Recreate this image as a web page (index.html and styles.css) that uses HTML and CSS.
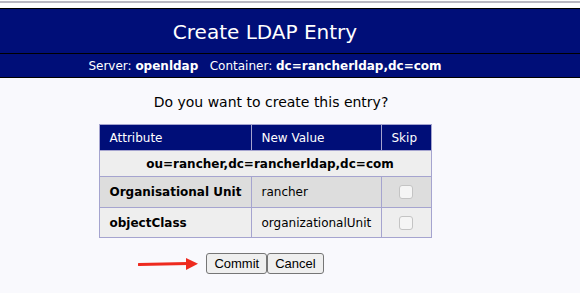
FILE: index.html
```html
<!DOCTYPE html>
<html lang="en">
<head>
    <meta charset="UTF-8">
    <meta name="viewport" content="width=device-width, initial-scale=1.0">
    <title>Create LDAP Entry</title>
    <link rel="stylesheet" href="styles.css">
</head>
<body>
    <div class="topbar"></div>
    <div class="header">
        <h1 class="title">Create LDAP Entry</h1>
        <div class="subtitle">Server: <b>openldap</b>&nbsp;&nbsp; Container: <b>dc=rancherldap,dc=com</b></div>
    </div>
    <div class="content">
        <p class="question">Do you want to create this entry?</p>
        <table class="entry">
            <colgroup>
                <col class="col-attr">
                <col class="col-value">
                <col class="col-skip">
            </colgroup>
            <tr>
                <th>Attribute</th>
                <th>New Value</th>
                <th>Skip</th>
            </tr>
            <tr class="dn-row">
                <td colspan="3">ou=rancher,dc=rancherldap,dc=com</td>
            </tr>
            <tr class="row-dark">
                <td class="attr">Organisational Unit</td>
                <td>rancher</td>
                <td class="skip"><span class="checkbox"></span></td>
            </tr>
            <tr class="row-light">
                <td class="attr">objectClass</td>
                <td>organizationalUnit</td>
                <td class="skip"><span class="checkbox"></span></td>
            </tr>
        </table>
        <div class="actions">
            <svg class="arrow" width="62" height="14" viewBox="0 0 62 14">
                <path d="M1 7.5 L50 6.5" stroke="#ee2a1f" stroke-width="3" stroke-linecap="round" fill="none"/>
                <path d="M48 1 L60 6.8 L48 13 Z" fill="#ee2a1f"/>
            </svg>
            <button class="btn">Commit</button><button class="btn">Cancel</button>
        </div>
    </div>
</body>
</html>
```

FILE: styles.css
```css
body {
    margin: 0;
    font-family: "DejaVu Sans", Verdana, sans-serif;
    background-color: #f9f9fd;
}
.topbar {
    height: 8px;
    background-color: #fff;
    border-top: 1px solid #fff;
    box-sizing: border-box;
}
.topbar::before {
    content: "";
    display: block;
    height: 2px;
    background-color: #b9b8c2;
}
.header {
    background-color: #000e78;
    color: #fff;
    border-top: 1px solid #000;
    border-bottom: 1px solid #000;
}
.title {
    margin: 0;
    height: 44px;
    line-height: 46px;
    font-size: 20px;
    font-weight: normal;
    text-align: center;
    padding-right: 50px;
    border-bottom: 1px solid #000;
}
.subtitle {
    height: 23px;
    line-height: 24px;
    font-size: 12px;
    text-align: center;
    padding-right: 50px;
}
.content {
    width: 530px;
    display: flex;
    flex-direction: column;
    align-items: center;
}
.question {
    margin: 16px 0 14px 12px;
    font-size: 14px;
    line-height: 16px;
}
.entry {
    border-collapse: collapse;
    table-layout: fixed;
    width: 332px;
    font-size: 12px;
    border: 1px solid #a5a4cf;
}
.col-attr { width: 152px; }
.col-value { width: 130px; }
.col-skip { width: 50px; }
.entry th,
.entry td {
    border: 1px solid #a5a4cf;
    padding: 0 0 0 10px;
    text-align: left;
    white-space: nowrap;
}
.entry th {
    background-color: #000e78;
    color: #fff;
    font-weight: normal;
    height: 25px;
}
.dn-row td {
    background-color: #eeeeee;
    font-weight: bold;
    text-align: center;
    height: 25px;
}
.row-dark td {
    background-color: #dddddd;
    height: 30px;
}
.row-light td {
    background-color: #eeeeee;
    height: 29px;
}
.attr {
    font-weight: bold;
}
.entry td.skip {
    text-align: center;
    padding: 0;
}
.checkbox {
    display: inline-block;
    width: 12px;
    height: 12px;
    border: 1px solid #c4c4c4;
    border-radius: 3px;
    background-color: #f5f5f5;
    vertical-align: middle;
}
.actions {
    position: relative;
    margin-top: 15px;
    display: flex;
}
.arrow {
    position: absolute;
    left: -68px;
    top: 4px;
}
.btn {
    font-family: "Liberation Sans", Arial, sans-serif;
    font-size: 13px;
    height: 21px;
    padding: 0 7px;
    background-color: #efefef;
    border: 1px solid #767676;
    border-radius: 3px;
    color: #000;
}
```
